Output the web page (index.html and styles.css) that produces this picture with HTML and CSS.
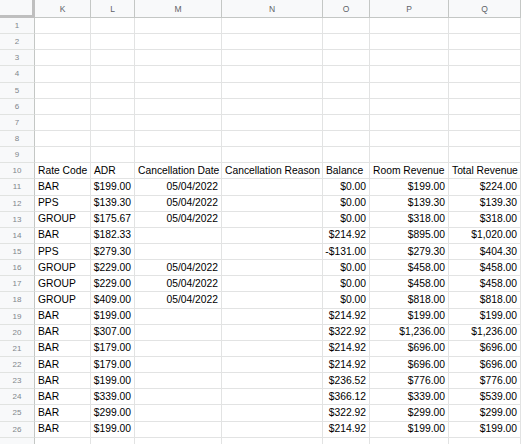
FILE: index.html
```html
<!DOCTYPE html>
<html>
<head>
<meta charset="utf-8">
<link rel="stylesheet" href="styles.css">
</head>
<body>
<div class="sheet" id="sheet">
  <div class="corner"></div>
  <div class="ch">K</div><div class="ch">L</div><div class="ch">M</div><div class="ch">N</div><div class="ch">O</div><div class="ch">P</div><div class="ch">Q</div>

  <div class="rh">1</div><div class="c"></div><div class="c"></div><div class="c"></div><div class="c"></div><div class="c"></div><div class="c"></div><div class="c"></div>
  <div class="rh">2</div><div class="c"></div><div class="c"></div><div class="c"></div><div class="c"></div><div class="c"></div><div class="c"></div><div class="c"></div>
  <div class="rh">3</div><div class="c"></div><div class="c"></div><div class="c"></div><div class="c"></div><div class="c"></div><div class="c"></div><div class="c"></div>
  <div class="rh">4</div><div class="c"></div><div class="c"></div><div class="c"></div><div class="c"></div><div class="c"></div><div class="c"></div><div class="c"></div>
  <div class="rh">5</div><div class="c"></div><div class="c"></div><div class="c"></div><div class="c"></div><div class="c"></div><div class="c"></div><div class="c"></div>
  <div class="rh">6</div><div class="c"></div><div class="c"></div><div class="c"></div><div class="c"></div><div class="c"></div><div class="c"></div><div class="c"></div>
  <div class="rh">7</div><div class="c"></div><div class="c"></div><div class="c"></div><div class="c"></div><div class="c"></div><div class="c"></div><div class="c"></div>
  <div class="rh">8</div><div class="c"></div><div class="c"></div><div class="c"></div><div class="c"></div><div class="c"></div><div class="c"></div><div class="c"></div>
  <div class="rh">9</div><div class="c"></div><div class="c"></div><div class="c"></div><div class="c"></div><div class="c"></div><div class="c"></div><div class="c"></div>

  <div class="rh">10</div><div class="c">Rate Code</div><div class="c">ADR</div><div class="c">Cancellation Date</div><div class="c">Cancellation Reason</div><div class="c">Balance</div><div class="c">Room Revenue</div><div class="c">Total Revenue</div>
  <div class="rh">11</div><div class="c">BAR</div><div class="c r">$199.00</div><div class="c r">05/04/2022</div><div class="c"></div><div class="c r">$0.00</div><div class="c r">$199.00</div><div class="c r">$224.00</div>
  <div class="rh">12</div><div class="c">PPS</div><div class="c r">$139.30</div><div class="c r">05/04/2022</div><div class="c"></div><div class="c r">$0.00</div><div class="c r">$139.30</div><div class="c r">$139.30</div>
  <div class="rh">13</div><div class="c">GROUP</div><div class="c r">$175.67</div><div class="c r">05/04/2022</div><div class="c"></div><div class="c r">$0.00</div><div class="c r">$318.00</div><div class="c r">$318.00</div>
  <div class="rh">14</div><div class="c">BAR</div><div class="c r">$182.33</div><div class="c r"></div><div class="c"></div><div class="c r">$214.92</div><div class="c r">$895.00</div><div class="c r">$1,020.00</div>
  <div class="rh">15</div><div class="c">PPS</div><div class="c r">$279.30</div><div class="c r"></div><div class="c"></div><div class="c r">-$131.00</div><div class="c r">$279.30</div><div class="c r">$404.30</div>
  <div class="rh">16</div><div class="c">GROUP</div><div class="c r">$229.00</div><div class="c r">05/04/2022</div><div class="c"></div><div class="c r">$0.00</div><div class="c r">$458.00</div><div class="c r">$458.00</div>
  <div class="rh">17</div><div class="c">GROUP</div><div class="c r">$229.00</div><div class="c r">05/04/2022</div><div class="c"></div><div class="c r">$0.00</div><div class="c r">$458.00</div><div class="c r">$458.00</div>
  <div class="rh">18</div><div class="c">GROUP</div><div class="c r">$409.00</div><div class="c r">05/04/2022</div><div class="c"></div><div class="c r">$0.00</div><div class="c r">$818.00</div><div class="c r">$818.00</div>
  <div class="rh">19</div><div class="c">BAR</div><div class="c r">$199.00</div><div class="c r"></div><div class="c"></div><div class="c r">$214.92</div><div class="c r">$199.00</div><div class="c r">$199.00</div>
  <div class="rh">20</div><div class="c">BAR</div><div class="c r">$307.00</div><div class="c r"></div><div class="c"></div><div class="c r">$322.92</div><div class="c r">$1,236.00</div><div class="c r">$1,236.00</div>
  <div class="rh">21</div><div class="c">BAR</div><div class="c r">$179.00</div><div class="c r"></div><div class="c"></div><div class="c r">$214.92</div><div class="c r">$696.00</div><div class="c r">$696.00</div>
  <div class="rh">22</div><div class="c">BAR</div><div class="c r">$179.00</div><div class="c r"></div><div class="c"></div><div class="c r">$214.92</div><div class="c r">$696.00</div><div class="c r">$696.00</div>
  <div class="rh">23</div><div class="c">BAR</div><div class="c r">$199.00</div><div class="c r"></div><div class="c"></div><div class="c r">$236.52</div><div class="c r">$776.00</div><div class="c r">$776.00</div>
  <div class="rh">24</div><div class="c">BAR</div><div class="c r">$339.00</div><div class="c r"></div><div class="c"></div><div class="c r">$366.12</div><div class="c r">$339.00</div><div class="c r">$539.00</div>
  <div class="rh">25</div><div class="c">BAR</div><div class="c r">$299.00</div><div class="c r"></div><div class="c"></div><div class="c r">$322.92</div><div class="c r">$299.00</div><div class="c r">$299.00</div>
  <div class="rh">26</div><div class="c">BAR</div><div class="c r">$199.00</div><div class="c r"></div><div class="c"></div><div class="c r">$214.92</div><div class="c r">$199.00</div><div class="c r">$199.00</div>
  <div class="rh"></div><div class="c"></div><div class="c"></div><div class="c"></div><div class="c"></div><div class="c"></div><div class="c"></div><div class="c"></div>
</div>
</body>
</html>
```
FILE: styles.css
```css
html, body {
  margin: 0;
  padding: 0;
  background: #ffffff;
  overflow: hidden;
  width: 521px;
  height: 444px;
}

.sheet {
  display: grid;
  grid-template-columns: 35px 56px 44px 87px 101px 47px 79px 72px;
  grid-template-rows: 18px repeat(27, 16.15px);
  font-family: "Liberation Sans", Arial, sans-serif;
  font-size: 10.3px;
  color: #000000;
}

.sheet > div {
  box-sizing: border-box;
  overflow: hidden;
  white-space: nowrap;
}

.corner {
  background: #f8f9fa;
  border-right: 3px solid #bfbfbf;
  border-bottom: 3px solid #bfbfbf;
}

.ch {
  background: #f8f9fa;
  border-right: 1px solid #c4c7c5;
  border-bottom: 1px solid #c4c7c5;
  font-size: 8.5px;
  color: #5f6368;
  display: flex;
  align-items: center;
  justify-content: center;
  padding-top: 1px;
}

.rh {
  background: #f8f9fa;
  border-right: 1px solid #c4c7c5;
  border-bottom: 1px solid #e1e3e1;
  font-size: 8px;
  color: #80868b;
  display: flex;
  align-items: center;
  justify-content: center;
}

.c {
  border-right: 1px solid #e2e3e3;
  border-bottom: 1px solid #e2e3e3;
  display: flex;
  align-items: center;
  padding: 0 3px 0 3px;
  line-height: 12px;
}

.c.r {
  justify-content: flex-end;
  padding-right: 3px;
}
```
